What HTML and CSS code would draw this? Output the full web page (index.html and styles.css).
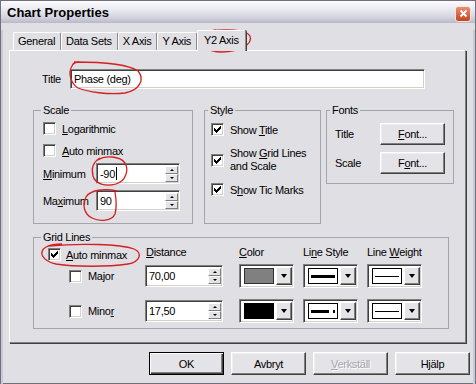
FILE: index.html
```html
<!DOCTYPE html>
<html lang="en">

<head>
    <meta charset="UTF-8">
    <title>Chart Properties</title>
    <link rel="stylesheet" href="styles.css">
</head>

<body>
    <div class="window">
        <div class="titlebar">
            <span class="caption">Chart Properties</span>
            <span class="close">
                <svg width="9" height="9" viewBox="0 0 9 9"><path d="M1.5 1.5L7.5 7.5M7.5 1.5L1.5 7.5" stroke="#fff" stroke-width="2" /></svg>
            </span>
        </div>

        <div class="client">
            <div class="tabs">
                <div class="tab">General</div>
                <div class="tab">Data Sets</div>
                <div class="tab">X Axis</div>
                <div class="tab">Y Axis</div>
                <div class="tab active">Y2 Axis</div>
            </div>

            <div class="panel">
                <div class="title-row">
                    <span class="title-label">Title</span>
                    <div class="edit title-edit">Phase (deg)</div>
                </div>

                <div class="groups">
                    <!-- scale -->
                    <div class="group scale">
                        <div class="legend">Scale</div>
                        <div class="check-row">
                            <span class="check"></span><span><u>L</u>ogarithmic</span>
                        </div>
                        <div class="check-row second">
                            <span class="check"></span><span><u>A</u>uto minmax</span>
                        </div>
                        <div class="field-row">
                            <span class="field-label"><u>M</u>inimum</span>
                            <div class="edit spin scale-spin">
                                <span>-90</span><span class="caret"></span>
                                <span class="arrows"><span class="arr up"></span><span class="arr down"></span></span>
                            </div>
                        </div>
                        <div class="field-row second">
                            <span class="field-label">Ma<u>x</u>imum</span>
                            <div class="edit spin scale-spin">
                                <span>90</span>
                                <span class="arrows"><span class="arr up"></span><span class="arr down"></span></span>
                            </div>
                        </div>
                    </div>

                    <!-- style -->
                    <div class="group style">
                        <div class="legend">Style</div>
                        <div class="check-row">
                            <span class="check on"><svg width="7" height="7" viewBox="0 0 7 7"><polygon points="0,2 1,2 1,3 2,3 2,4 3,4 3,3 4,3 4,2 5,2 5,1 6,1 6,0 7,0 7,3 6,3 6,4 5,4 5,5 4,5 4,6 3,6 3,7 2,7 2,6 1,6 1,5 0,5" /></svg></span>
                            <span>Show <u>T</u>itle</span>
                        </div>
                        <div class="check-row tall">
                            <span class="check on"><svg width="7" height="7" viewBox="0 0 7 7"><polygon points="0,2 1,2 1,3 2,3 2,4 3,4 3,3 4,3 4,2 5,2 5,1 6,1 6,0 7,0 7,3 6,3 6,4 5,4 5,5 4,5 4,6 3,6 3,7 2,7 2,6 1,6 1,5 0,5" /></svg></span>
                            <span>Show <u>G</u>rid Lines<br>and Scale</span>
                        </div>
                        <div class="check-row last">
                            <span class="check on"><svg width="7" height="7" viewBox="0 0 7 7"><polygon points="0,2 1,2 1,3 2,3 2,4 3,4 3,3 4,3 4,2 5,2 5,1 6,1 6,0 7,0 7,3 6,3 6,4 5,4 5,5 4,5 4,6 3,6 3,7 2,7 2,6 1,6 1,5 0,5" /></svg></span>
                            <span>S<u>h</u>ow Tic Marks</span>
                        </div>
                    </div>

                    <!-- fonts -->
                    <div class="group fonts">
                        <div class="legend">Fonts</div>
                        <div class="font-row">
                            <span class="font-label">Title</span>
                            <div class="btn font-btn"><span><u>F</u>ont...</span></div>
                        </div>
                        <div class="font-row second">
                            <span class="font-label">Scale</span>
                            <div class="btn font-btn"><span>F<u>o</u>nt...</span></div>
                        </div>
                    </div>
                </div>

                <!-- grid lines -->
                <div class="group grid-box">
                    <div class="legend">Grid Lines</div>
                    <div class="gl-row head">
                        <div class="gl-auto">
                            <span class="check on"><svg width="7" height="7" viewBox="0 0 7 7"><polygon points="0,2 1,2 1,3 2,3 2,4 3,4 3,3 4,3 4,2 5,2 5,1 6,1 6,0 7,0 7,3 6,3 6,4 5,4 5,5 4,5 4,6 3,6 3,7 2,7 2,6 1,6 1,5 0,5" /></svg></span>
                            <span><u>A</u>uto minmax</span>
                        </div>
                        <span class="gl-head dist"><u>D</u>istance</span>
                        <span class="gl-head"><u>C</u>olor</span>
                        <span class="gl-head">Li<u>n</u>e Style</span>
                        <span class="gl-head">Line <u>W</u>eight</span>
                    </div>

                    <div class="gl-row data">
                        <div class="gl-name"><span class="check"></span><span>Major</span></div>
                        <div class="edit spin gl-spin">
                            <span>70,00</span>
                            <span class="arrows"><span class="arr up"></span><span class="arr down"></span></span>
                        </div>
                        <div class="combo"><span class="swatch gray"></span><span class="drop"></span></div>
                        <div class="combo">
                            <span class="swatch line"><span class="stroke thick"></span></span><span class="drop"></span>
                        </div>
                        <div class="combo">
                            <span class="swatch line"><span class="stroke thin"></span></span><span class="drop"></span>
                        </div>
                    </div>

                    <div class="gl-row data minor">
                        <div class="gl-name"><span class="check"></span><span>Mino<u>r</u></span></div>
                        <div class="edit spin gl-spin">
                            <span>17,50</span>
                            <span class="arrows"><span class="arr up"></span><span class="arr down"></span></span>
                        </div>
                        <div class="combo"><span class="swatch black"></span><span class="drop"></span></div>
                        <div class="combo">
                            <span class="swatch line"><span class="stroke dash"></span><span class="stroke dot"></span></span><span class="drop"></span>
                        </div>
                        <div class="combo">
                            <span class="swatch line"><span class="stroke thin"></span></span><span class="drop"></span>
                        </div>
                    </div>
                </div>
            </div>

            <div class="buttons">
                <div class="btn default">OK</div>
                <div class="btn">Avbryt</div>
                <div class="btn disabled"><span><u>V</u>erkställ</span></div>
                <div class="btn">Hjälp</div>
            </div>
        </div>

        <!-- red pen marks drawn over the dialog -->
        <svg class="marks" width="476" height="384" viewBox="0 0 476 384">
            <path d="M209 31 C225 29 246 29 250 36 C253 44 240 52 222 52 C207 52 200 46 203 38 C204 33 208 31 216 30" />
            <path d="M74 62 C100 62 128 64 138 71 C145 79 140 90 125 93 C108 95 88 92 78 88 C70 83 68 72 72 66 C73 63 76 62 79 62" />
            <path d="M98 160 C105 155 120 156 125 163 C129 170 126 181 116 184 C106 187 95 184 93 176 C91 168 93 162 100 158" />
            <path d="M117 191 C105 188 90 190 86 197 C82 205 84 214 92 218 C100 222 112 221 115 214 C117 207 116 198 115 192" />
            <path d="M48 246 C80 243 120 244 134 249 C143 253 140 262 128 264 C108 267 75 267 56 264 C42 261 38 252 46 247 C50 245 56 244 62 244" />
        </svg>
    </div>
</body>

</html>
```

FILE: styles.css
```css
/* dialog frame */
body {
    margin: 0;
    font-family: "Liberation Sans", Arial, sans-serif;
    font-size: 11px;
    letter-spacing: -0.3px;
    color: #000;
    background: #e0dfe3;
}

.window {
    position: relative;
    width: 476px;
    height: 384px;
    box-sizing: border-box;
    border: 1px solid #6f6f80;
    background: #e0dfe3;
    white-space: nowrap;
}

.titlebar {
    height: 22px;
    display: flex;
    align-items: center;
    justify-content: space-between;
    padding: 0 4px 0 6px;
    background: linear-gradient(#fcfcfe, #e9e9f0 40%, #d3d3de 75%, #b8b8c9);
}

.caption {
    font-weight: bold;
    font-size: 13px;
    letter-spacing: 0;
}

.close {
    width: 16px;
    height: 16px;
    box-sizing: border-box;
    margin-top: 3px;
    border: 1px solid #f3e6e2;
    border-radius: 3px;
    background: linear-gradient(#ea8e70, #c9421d);
    display: flex;
    align-items: center;
    justify-content: center;
}

.client {
    height: 360px;
    box-sizing: border-box;
    border: 2px solid #c9c9d6;
    border-top: 0;
}

/* tabs */
.tabs {
    display: flex;
    align-items: flex-end;
    height: 20px;
    margin-top: 7px;
    padding-left: 10px;
}

.tab {
    height: 18px;
    box-sizing: border-box;
    padding: 0 5px 0 4px;
    line-height: 17px;
    border: 1px solid #fff;
    border-right-color: #8c8c8c;
    border-bottom: 0;
    border-radius: 2px 2px 0 0;
}

.tab.active {
    position: relative;
    z-index: 1;
    height: 21px;
    margin-bottom: -1px;
    padding: 0 6px;
    line-height: 18px;
    background: #e0dfe3;
    box-shadow: 1px 0 0 #404040;
}

.panel {
    height: 293px;
    box-sizing: border-box;
    margin: 0 7px 0 6px;
    padding: 18px 0 0 23px;
    border: 1px solid;
    border-color: #fff #808080 #808080 #fff;
    box-shadow: 1px 1px 0 #404040;
}

/* common controls */
.edit {
    box-sizing: border-box;
    display: flex;
    align-items: center;
    padding: 0 3px;
    background: #fff;
    border: 1px solid;
    border-color: #808080 #fff #fff #808080;
    box-shadow: inset 1px 1px #404040, inset -1px -1px #d4d0c8;
}

.check {
    flex: none;
    width: 13px;
    height: 13px;
    box-sizing: border-box;
    display: flex;
    align-items: center;
    justify-content: center;
    background: #fff;
    border: 1px solid;
    border-color: #808080 #fff #fff #808080;
    box-shadow: inset 1px 1px #404040, inset -1px -1px #d4d0c8;
}

.check svg {
    fill: #000;
}

.btn {
    width: 75px;
    height: 23px;
    box-sizing: border-box;
    display: flex;
    align-items: center;
    justify-content: center;
    background: #e4e3e7;
    border: 1px solid;
    border-color: #fff #404040 #404040 #fff;
    box-shadow: inset -1px -1px #808080, inset 1px 1px #efefef;
}

.btn.default {
    border-color: #000;
    box-shadow: inset 1px 1px #fff, inset -1px -1px #404040, inset -2px -2px #808080;
}

.btn.disabled {
    color: #a6a5aa;
    text-shadow: 1px 1px 0 #fff;
}

.spin {
    padding-right: 1px;
}

.caret {
    width: 1px;
    height: 13px;
    margin-left: 1px;
    background: #000;
}

.arrows {
    margin-left: auto;
    display: flex;
    flex-direction: column;
}

.arr {
    width: 13px;
    height: 8px;
    box-sizing: border-box;
    display: flex;
    align-items: center;
    justify-content: center;
    background: #e4e3e7;
    border: 1px solid;
    border-color: #fff #808080 #808080 #fff;
}

.arr::after {
    content: "";
    border-left: 2px solid transparent;
    border-right: 2px solid transparent;
}

.arr.up::after {
    border-bottom: 2px solid #000;
}

.arr.down::after {
    border-top: 2px solid #000;
}

/* group boxes */
.group {
    box-sizing: border-box;
    border: 1px solid #a4a4ac;
}

.legend {
    width: fit-content;
    margin: -7px 0 0 7px;
    padding: 0 2px;
    line-height: 13px;
    background: #e0dfe3;
}

.title-row {
    display: flex;
    align-items: center;
    padding-left: 9px;
}

.title-label {
    width: 28px;
}

.title-edit {
    width: 355px;
    height: 20px;
}

.groups {
    display: flex;
    align-items: flex-start;
    margin-top: 21px;
}

.check-row {
    display: flex;
    align-items: center;
    gap: 6px;
    height: 15px;
    margin-top: 4px;
}

.scale {
    width: 160px;
    height: 114px;
}

.scale .check-row,
.scale .field-row {
    padding-left: 9px;
}

.scale .check-row.second {
    margin-top: 7px;
}

.field-row {
    display: flex;
    align-items: center;
    margin-top: 5px;
}

.field-row.second {
    margin-top: 6px;
}

.field-label {
    width: 53px;
}

.scale-spin {
    width: 84px;
    height: 21px;
}

.style {
    width: 117px;
    height: 114px;
    margin-left: 11px;
}

.style .legend,
.fonts .legend {
    margin-left: 3px;
}

.style .check-row {
    padding-left: 6px;
    margin-top: 5px;
}

.style .check-row.tall {
    height: 26px;
    margin-top: 10px;
    line-height: 13px;
}

.style .check-row.last {
    margin-top: 9px;
}

.fonts {
    width: 128px;
    height: 74px;
    margin-left: 5px;
}

.font-row {
    display: flex;
    align-items: center;
    padding-left: 8px;
    margin-top: 6px;
}

.font-row.second {
    margin-top: 7px;
}

.font-label {
    width: 45px;
}

.font-btn {
    width: 65px;
    height: 22px;
}

/* grid lines */
.grid-box {
    width: 416px;
    height: 92px;
    margin-top: 13px;
}

.gl-row {
    display: grid;
    grid-template-columns: 111px 94px 64px 64px 55px;
    align-items: center;
}

.gl-row.head {
    grid-template-rows: 15px;
    height: 15px;
    margin-top: 2px;
}

.gl-head {
    align-self: start;
    line-height: 13px;
}

.gl-head.dist {
    padding-left: 1px;
}

.gl-auto {
    align-self: end;
    display: flex;
    align-items: center;
    gap: 5px;
    padding-left: 14px;
}

.gl-row.data {
    grid-template-rows: 24px;
    height: 24px;
    margin-top: 3px;
}

.gl-row.minor {
    margin-top: 11px;
}

.gl-name {
    display: flex;
    align-items: center;
    gap: 6px;
    padding-left: 35px;
}

.gl-spin {
    width: 78px;
    height: 22px;
}

.combo {
    width: 55px;
    height: 24px;
    box-sizing: border-box;
    display: flex;
    align-items: center;
    padding: 2px 1px 2px 4px;
    background: #fff;
    border: 1px solid;
    border-color: #808080 #fff #fff #808080;
    box-shadow: inset 1px 1px #404040, inset -1px -1px #d4d0c8;
}

.swatch {
    width: 30px;
    height: 16px;
    box-sizing: border-box;
    border: 1px solid #000;
}

.swatch.gray {
    background: #808080;
    border-color: #303030;
}

.swatch.black {
    background: #000;
}

.swatch.line {
    display: flex;
    align-items: center;
    padding: 0 2px;
    background: #fff;
}

.stroke {
    background: #000;
}

.stroke.thick {
    flex: 1;
    height: 3px;
}

.stroke.thin {
    flex: 1;
    height: 1px;
}

.stroke.dash {
    width: 18px;
    height: 3px;
}

.stroke.dot {
    width: 2px;
    height: 3px;
    margin-left: 4px;
}

.drop {
    width: 16px;
    height: 18px;
    box-sizing: border-box;
    margin-left: auto;
    display: flex;
    align-items: center;
    justify-content: center;
    background: #e4e3e7;
    border: 1px solid;
    border-color: #fff #404040 #404040 #fff;
    box-shadow: inset -1px -1px #808080;
}

.drop::after {
    content: "";
    border-left: 3px solid transparent;
    border-right: 3px solid transparent;
    border-top: 4px solid #000;
}

/* dialog buttons */
.buttons {
    display: flex;
    justify-content: flex-end;
    gap: 7px;
    margin-top: 9px;
    padding-right: 3px;
}

/* pen marks */
.marks {
    position: absolute;
    top: -1px;
    left: -1px;
    pointer-events: none;
}

.marks path {
    fill: none;
    stroke: #d42020;
    stroke-width: 1.3;
}
```
